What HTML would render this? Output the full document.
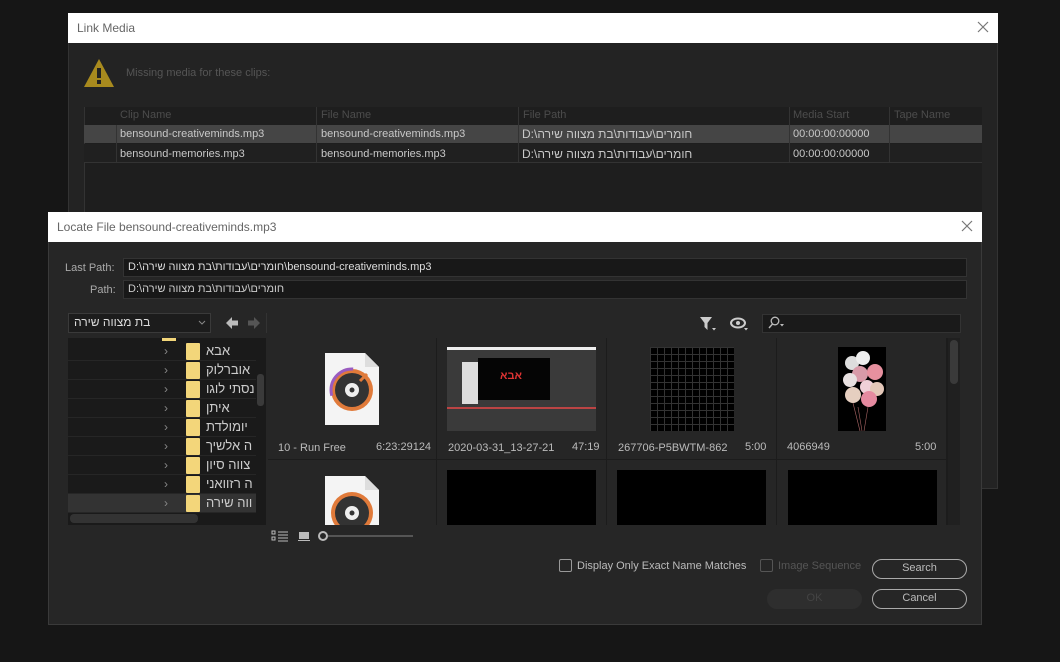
<!DOCTYPE html>
<html><head><meta charset="utf-8"><style>
*{box-sizing:border-box;margin:0;padding:0}
body{width:1060px;height:662px;background:#161616;position:relative;overflow:hidden;font-family:"Liberation Sans","Noto Sans CJK SC",sans-serif;font-size:11px;color:#c8c8c8}
.a{position:absolute}
.t{white-space:nowrap}
.title{background:#fff;color:#666;font-size:12px;padding-left:9px;line-height:30px}
.heb{font-family:"Liberation Sans","DejaVu Sans",sans-serif}
.btn{border:1px solid #aaa;border-radius:10px;text-align:center;line-height:17px;color:#bbb}
.cell{background:#262626}
.folder{width:14px;height:17px;background:#f3d67a;border-radius:1px}
</style></head><body>
<!-- Link Media dialog -->
<div class="a" style="left:68px;top:13px;width:930px;height:476px;background:#232323;border:1px solid #333"></div>
<div class="a title" style="left:68px;top:13px;width:930px;height:30px">Link Media</div>
<svg class="a" style="left:977px;top:21px" width="12" height="12"><path d="M1 1L11 11M11 1L1 11" stroke="#777" stroke-width="1.2"/></svg>
<svg class="a" style="left:83px;top:57px" width="32" height="32"><path d="M16 2 L31 30 L1 30Z" fill="#a88a1e"/><rect x="14" y="11" width="4" height="10" fill="#222"/><rect x="14" y="23" width="4" height="4" fill="#222"/></svg>
<div class="a t" style="left:126px;top:67px;color:#555">Missing media for these clips:</div>
<div class="a" style="left:84px;top:107px;width:898px;height:110px;background:#1e1e1e;border-left:1px solid #333"></div>
<div class="a t" style="left:120px;top:109px;color:#4c4c4c">Clip Name</div>
<div class="a t" style="left:321px;top:109px;color:#4c4c4c">File Name</div>
<div class="a t" style="left:523px;top:109px;color:#4c4c4c">File Path</div>
<div class="a t" style="left:793px;top:109px;color:#4c4c4c">Media Start</div>
<div class="a t" style="left:894px;top:109px;color:#4c4c4c">Tape Name</div>
<div class="a" style="left:84px;top:125px;width:898px;height:18px;background:#454545"></div>
<div class="a" style="left:84px;top:144px;width:898px;height:19px;background:#202020;border-bottom:1px solid #333"></div>
<div class="a" style="left:116px;top:125px;width:1px;height:38px;background:#333"></div>
<div class="a" style="left:316px;top:107px;width:1px;height:56px;background:#333"></div>
<div class="a" style="left:518px;top:107px;width:1px;height:56px;background:#333"></div>
<div class="a" style="left:789px;top:107px;width:1px;height:56px;background:#333"></div>
<div class="a" style="left:889px;top:107px;width:1px;height:56px;background:#333"></div>
<div class="a t" style="left:120px;top:128px">bensound-creativeminds.mp3</div>
<div class="a t" style="left:321px;top:128px">bensound-creativeminds.mp3</div>
<div class="a t heb" style="left:522px;top:127px;font-size:12px">D:\חומרים\עבודות\בת מצווה שירה</div>
<div class="a t" style="left:793px;top:128px">00:00:00:00000</div>
<div class="a t" style="left:120px;top:148px">bensound-memories.mp3</div>
<div class="a t" style="left:321px;top:148px">bensound-memories.mp3</div>
<div class="a t heb" style="left:522px;top:147px;font-size:12px">D:\חומרים\עבודות\בת מצווה שירה</div>
<div class="a t" style="left:793px;top:148px">00:00:00:00000</div>

<!-- Locate dialog -->
<div class="a" style="left:48px;top:212px;width:934px;height:413px;background:#262626;border:1px solid #3a3a3a"></div>
<div class="a title" style="left:48px;top:212px;width:934px;height:30px">Locate File bensound-creativeminds.mp3</div>
<svg class="a" style="left:961px;top:220px" width="12" height="12"><path d="M1 1L11 11M11 1L1 11" stroke="#777" stroke-width="1.2"/></svg>
<div class="a t" style="left:65px;top:262px;color:#aaa">Last Path:</div>
<div class="a t" style="left:90px;top:284px;color:#aaa">Path:</div>
<div class="a" style="left:123px;top:258px;width:844px;height:19px;background:#181818;border:1px solid #333"></div>
<div class="a" style="left:123px;top:280px;width:844px;height:19px;background:#181818;border:1px solid #333"></div>
<div class="a t heb" style="left:128px;top:261px;color:#ddd">D:\חומרים\עבודות\בת מצווה שירה\bensound-creativeminds.mp3</div>
<div class="a t heb" style="left:128px;top:283px;color:#ccc">D:\חומרים\עבודות\בת מצווה שירה</div>

<div class="a" style="left:68px;top:313px;width:143px;height:20px;background:#1c1c1c;border:1px solid #3a3a3a"></div>
<div class="a t heb" style="left:74px;top:315px;font-size:12px;color:#ddd">בת מצווה שירה</div>
<svg class="a" style="left:198px;top:320px" width="8" height="6"><path d="M1 1L4 4L7 1" stroke="#888" fill="none"/></svg>
<svg class="a" style="left:225px;top:316px" width="36" height="14"><path d="M1 7L7 1V4.5H13V9.5H7V13Z" fill="#bbb"/><path d="M35 7L29 1V4.5H23V9.5H29V13Z" fill="#555"/></svg>
<div class="a" style="left:266px;top:313px;width:1px;height:20px;background:#333"></div>

<!-- tree -->
<div class="a" style="left:68px;top:338px;width:198px;height:187px;background:#1a1a1a"></div>
<div class="a" style="left:162px;top:338px;width:14px;height:3px;background:#f3d67a"></div>
<div class="a" style="left:68px;top:494px;width:188px;height:19px;background:#333"></div>
<div id="tree"></div>
<div class="a" style="left:257px;top:374px;width:7px;height:32px;background:#3a3a3a;border-radius:3px"></div>
<div class="a" style="left:70px;top:514px;width:128px;height:9px;background:#333;border-radius:4px"></div>

<!-- grid -->
<div class="a" style="left:268px;top:338px;width:692px;height:187px;background:#1c1c1c"></div>
<div class="a cell" style="left:268px;top:338px;width:168px;height:121px"></div>
<div class="a cell" style="left:437px;top:338px;width:169px;height:121px"></div>
<div class="a cell" style="left:607px;top:338px;width:169px;height:121px"></div>
<div class="a cell" style="left:777px;top:338px;width:169px;height:121px"></div>
<div class="a cell" style="left:268px;top:460px;width:168px;height:65px"></div>
<div class="a cell" style="left:437px;top:460px;width:169px;height:65px"></div>
<div class="a cell" style="left:607px;top:460px;width:169px;height:65px"></div>
<div class="a cell" style="left:777px;top:460px;width:169px;height:65px"></div>
<div class="a" style="left:948px;top:338px;width:12px;height:187px;background:#202020"></div>
<div class="a" style="left:950px;top:340px;width:8px;height:44px;background:#3a3a3a;border-radius:4px"></div>

<svg class="a" style="left:323px;top:351px" width="58" height="76"><path d="M2 2 H42 L56 16 V74 H2Z" fill="#f4f4f4"/><path d="M42 2 V16 H56" fill="#ddd"/><circle cx="29" cy="39" r="21" fill="#e07a3a"/><circle cx="29" cy="39" r="21" fill="none" stroke="#9a5cc0" stroke-width="3" stroke-dasharray="40 100" stroke-dashoffset="-60"/><circle cx="29" cy="39" r="17" fill="#333"/><circle cx="29" cy="39" r="7" fill="#eee"/><circle cx="29" cy="39" r="2.5" fill="#333"/><path d="M37 30 L44 23" stroke="#e07a3a" stroke-width="3"/></svg>
<svg class="a" style="left:323px;top:474px" width="58" height="51"><path d="M2 2 H42 L56 16 V51 H2Z" fill="#f4f4f4"/><path d="M42 2 V16 H56" fill="#ddd"/><circle cx="29" cy="39" r="21" fill="#e07a3a"/><circle cx="29" cy="39" r="17" fill="#333"/><circle cx="29" cy="39" r="7" fill="#eee"/><circle cx="29" cy="39" r="2.5" fill="#333"/></svg>

<div class="a" style="left:447px;top:347px;width:149px;height:84px;background:#3a3a3a;border-top:3px solid #eee"></div>
<div class="a" style="left:478px;top:358px;width:72px;height:42px;background:#050505"></div>
<div class="a t" style="left:500px;top:370px;color:#d33;font-weight:bold;font-size:11px">אבא</div>
<div class="a" style="left:462px;top:362px;width:16px;height:42px;background:#ddd"></div>
<div class="a" style="left:447px;top:407px;width:149px;height:2px;background:#b44"></div>

<div class="a" style="left:650px;top:347px;width:84px;height:84px;background:#000;background-image:linear-gradient(#333 1px,transparent 1px),linear-gradient(90deg,#333 1px,transparent 1px);background-size:7px 7px"></div>
<div class="a" style="left:838px;top:347px;width:48px;height:84px;background:#000"></div>
<svg class="a" style="left:838px;top:347px" width="48" height="84"><circle cx="14" cy="16" r="7" fill="#ddd"/><circle cx="25" cy="11" r="7" fill="#eee"/><circle cx="22" cy="27" r="8" fill="#d89aa8"/><circle cx="37" cy="25" r="8" fill="#e7909f"/><circle cx="12" cy="33" r="7" fill="#e8e0e0"/><circle cx="29" cy="40" r="7" fill="#f0d0d8"/><circle cx="39" cy="42" r="7" fill="#e3c7b8"/><circle cx="15" cy="48" r="8" fill="#e6cfc0"/><circle cx="31" cy="52" r="8" fill="#e58aa0"/><path d="M20 60 L24 84 M30 60 L26 84 M15 56 L22 84" stroke="#a66" stroke-width=".6"/></svg>
<div class="a" style="left:447px;top:470px;width:149px;height:55px;background:#000"></div>
<div class="a" style="left:617px;top:470px;width:149px;height:55px;background:#000"></div>
<div class="a" style="left:788px;top:470px;width:149px;height:55px;background:#000"></div>

<div class="a t" style="left:278px;top:442px;color:#bbb">10 - Run Free</div>
<div class="a t" style="left:376px;top:441px;color:#bbb">6:23:29124</div>
<div class="a t" style="left:448px;top:442px;color:#bbb">2020-03-31_13-27-21</div>
<div class="a t" style="left:572px;top:441px;color:#bbb">47:19</div>
<div class="a t" style="left:618px;top:442px;color:#bbb">267706-P5BWTM-862</div>
<div class="a t" style="left:745px;top:441px;color:#bbb">5:00</div>
<div class="a t" style="left:787px;top:441px;color:#bbb">4066949</div>
<div class="a t" style="left:915px;top:441px;color:#bbb">5:00</div>

<!-- toolbar -->
<svg class="a" style="left:699px;top:316px" width="18" height="16"><path d="M1 1 H13 L8.5 7 V14 L5.5 11 V7Z" fill="#ccc"/><path d="M13 12 L17 12 L15 14.5Z" fill="#ccc"/></svg>
<svg class="a" style="left:730px;top:316px" width="20" height="16"><ellipse cx="8" cy="7" rx="7" ry="4.5" fill="none" stroke="#ccc" stroke-width="2"/><circle cx="8" cy="7" r="2" fill="#ccc"/><path d="M14 12 L18 12 L16 14.5Z" fill="#ccc"/></svg>
<div class="a" style="left:762px;top:314px;width:199px;height:19px;background:#1a1a1a;border:1px solid #333"></div>
<svg class="a" style="left:767px;top:316px" width="20" height="14"><circle cx="8" cy="5" r="3.8" fill="none" stroke="#bbb" stroke-width="1.3"/><path d="M5.5 8 L2 12" stroke="#bbb" stroke-width="1.4"/><path d="M13 8 L17 8 L15 10.5Z" fill="#bbb"/></svg>

<!-- bottom left icons -->
<svg class="a" style="left:271px;top:530px" width="18" height="12"><rect x="1" y="1" width="3" height="3" fill="none" stroke="#bbb"/><rect x="1" y="7" width="3" height="3" fill="none" stroke="#bbb"/><path d="M7 2H17M7 5H17M7 8H17M7 11H17" stroke="#bbb"/></svg>
<div class="a" style="left:299px;top:532px;width:10px;height:7px;background:#bbb"></div>
<div class="a" style="left:298px;top:540px;width:12px;height:1px;background:#bbb"></div>
<div class="a" style="left:318px;top:531px;width:10px;height:10px;border:2px solid #bbb;border-radius:50%"></div>
<div class="a" style="left:328px;top:535px;width:85px;height:2px;background:#555"></div>

<!-- bottom controls -->
<div class="a" style="left:559px;top:559px;width:13px;height:13px;border:1px solid #999;border-radius:2px"></div>
<div class="a t" style="left:577px;top:560px;color:#bbb">Display Only Exact Name Matches</div>
<div class="a" style="left:760px;top:559px;width:13px;height:13px;border:1px solid #555;border-radius:2px"></div>
<div class="a t" style="left:778px;top:560px;color:#555">Image Sequence</div>
<div class="a btn" style="left:872px;top:559px;width:95px;height:20px">Search</div>
<div class="a btn" style="left:872px;top:589px;width:95px;height:20px">Cancel</div>
<div class="a btn" style="left:767px;top:589px;width:95px;height:20px;border-color:#2e2e2e;background:#2e2e2e;color:#444">OK</div>

<script>
var names=["אבא","אוברלוק","נסתי לוגו","איתן","יומולדת","ה אלשיך","צווה סיון","ה רזוואני","ווה שירה"];
var h="";
for(var i=0;i<9;i++){var y=343+i*19;
h+='<div class="a" style="left:68px;top:'+(y+17)+'px;width:188px;height:1px;background:#262626"></div>';
h+='<div class="a t" style="left:164px;top:'+(y+1)+'px;color:#888;font-size:12px">›</div>';
h+='<div class="a folder" style="left:186px;top:'+(y)+'px"></div>';
h+='<div class="a t heb" style="left:206px;top:'+(y)+'px;width:50px;overflow:hidden;direction:rtl;text-align:left;font-size:13px;color:#ccc">'+names[i]+'</div>';}
document.getElementById("tree").innerHTML=h;
</script>
</body></html>
